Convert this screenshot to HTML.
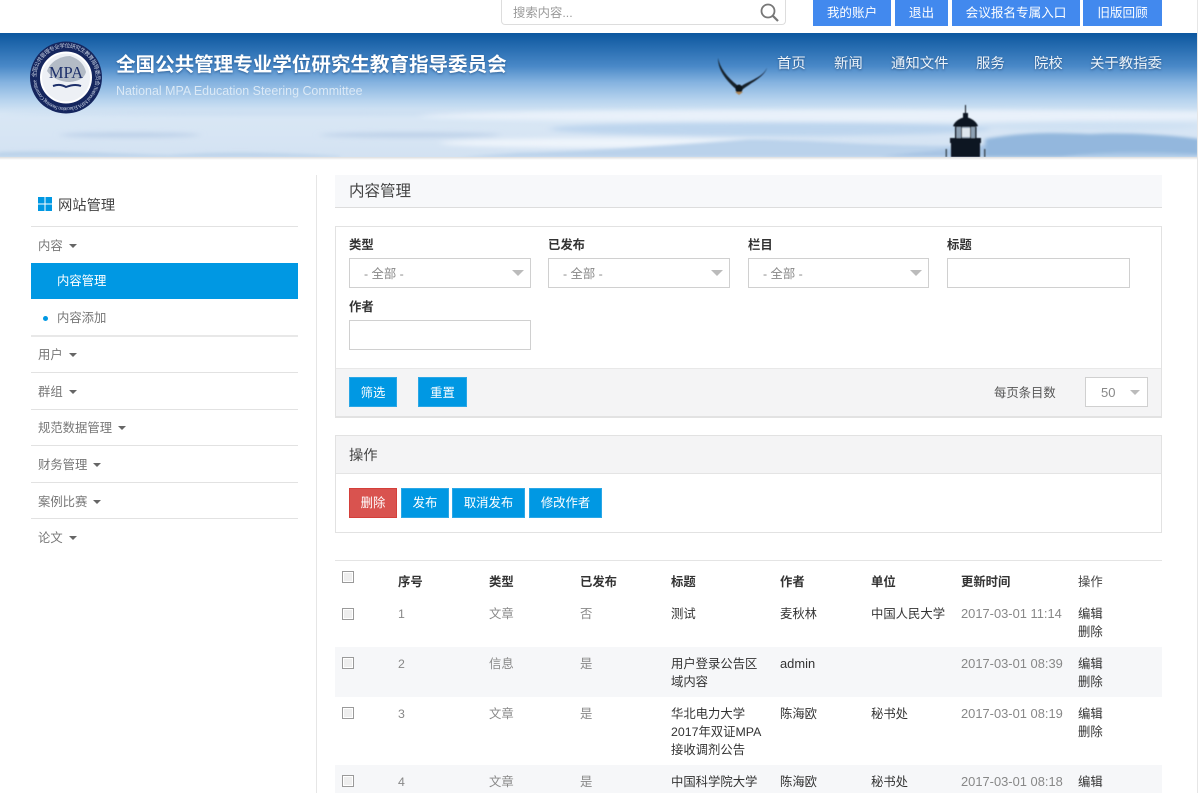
<!DOCTYPE html>
<html lang="zh">
<head>
<meta charset="utf-8">
<title>内容管理</title>
<style>
html,body{margin:0;padding:0;background:#fff;overflow:hidden}
body{width:1200px;height:793px;position:relative;font-family:"Liberation Sans","Noto Sans CJK SC",sans-serif;font-size:12.35px;color:#666}
body>*{filter:blur(.3px)}
.t{position:absolute;white-space:nowrap;line-height:18px}
.b{position:absolute;box-sizing:border-box}
.btn{position:absolute;box-sizing:border-box;color:#fff;text-align:center;height:30px;line-height:29px;background:#0098e3;border:1px solid #2aa7e6}
.top{position:absolute;top:0;height:26px;line-height:27px;background:#4289ee;color:#fff;text-align:center;font-size:12.6px}
.nav{position:absolute;top:54px;line-height:20px;font-size:14.4px;color:#eef4fa;white-space:nowrap;text-shadow:0 1px 2px rgba(20,50,90,.6)}
.line{position:absolute;left:31px;width:267px;height:1px;background:#e2e2e2}
.m{position:absolute;left:38px;line-height:18px;color:#777;white-space:nowrap;margin-top:1px}
.c{display:inline-block;width:0;height:0;margin-left:6px;vertical-align:2px;border-left:4px solid transparent;border-right:4px solid transparent;border-top:4px solid #666}
.lab{position:absolute;font-weight:bold;color:#333;line-height:18px;white-space:nowrap}
.sel{position:absolute;box-sizing:border-box;height:30px;width:182px;border:1px solid #d0d0d0;background:#fff;line-height:31px;color:#888;padding-left:14px}
.sel i{position:absolute;right:6px;top:11px;width:0;height:0;border-left:6px solid transparent;border-right:6px solid transparent;border-top:6px solid #bbb}
.cb{position:absolute;left:342px;width:12px;height:12px;box-sizing:border-box;border:1px solid #9a9a9a;background:#eee;box-shadow:inset 0 0 0 1px #fff}
.h{font-weight:bold;color:#333;margin-top:1px}
.d{color:#333;margin-top:1px}
.g{color:#888;margin-top:1px}
.dt{font-size:12.9px}
</style>
</head>
<body>

<!-- top bar -->
<div class="b" style="left:501px;top:0;width:285px;height:25px;border:1px solid #ddd;border-top:0;border-radius:0 0 4px 4px;background:#fff"></div>
<div class="t" style="left:513px;top:4px;color:#999">搜索内容...</div>
<svg style="position:absolute;left:759px;top:2px" width="21" height="21" viewBox="0 0 21 21"><circle cx="9" cy="9" r="6.500" fill="none" stroke="#777" stroke-width="1.800"/><path d="M13.800 13.800L19 19" stroke="#777" stroke-width="2.200" fill="none"/></svg>
<div class="top" style="left:813px;width:78px">我的账户</div>
<div class="top" style="left:895px;width:53px">退出</div>
<div class="top" style="left:952px;width:128px">会议报名专属入口</div>
<div class="top" style="left:1083px;width:79px">旧版回顾</div>

<!-- banner -->
<svg style="position:absolute;left:0;top:33px" width="1197" height="124" viewBox="0 0 1197 124">
  <defs>
    <linearGradient id="sky" x1="0" y1="0" x2="0" y2="1">
      <stop offset="0" stop-color="#0c579f"/>
      <stop offset=".27" stop-color="#4a89c8"/>
      <stop offset=".40" stop-color="#85b3e0"/>
      <stop offset=".54" stop-color="#b6d3ee"/>
      <stop offset=".65" stop-color="#d8e7f5"/>
      <stop offset=".81" stop-color="#d7e5f4"/>
      <stop offset="1" stop-color="#d3e2f2"/>
    </linearGradient>
    <filter id="bl" x="-30%" y="-200%" width="160%" height="500%"><feGaussianBlur stdDeviation="4 2.500"/></filter>
    <filter id="bl1" x="-10%" y="-50%" width="120%" height="200%"><feGaussianBlur stdDeviation="2 1.500"/></filter>
    <filter id="bl2"><feGaussianBlur stdDeviation=".5"/></filter>
  </defs>
  <rect width="1197" height="124" fill="url(#sky)"/>
  <!-- clouds -->
  <g filter="url(#bl)">
    <ellipse cx="130" cy="102" rx="70" ry="2.500" fill="#bcd0e8"/>
    <ellipse cx="410" cy="102" rx="90" ry="2.500" fill="#bcd0e8"/>
    <ellipse cx="300" cy="80" rx="300" ry="2" fill="#c9dcf0"/>
    <ellipse cx="860" cy="83" rx="440" ry="6" fill="#e9f1fa"/>
    <ellipse cx="770" cy="96" rx="220" ry="7" fill="#bdd5ee"/>
    <ellipse cx="620" cy="110" rx="180" ry="5" fill="#eef4fb"/>
    <ellipse cx="1090" cy="93" rx="110" ry="5" fill="#cfe1f3"/>
  </g>
  <g filter="url(#bl1)">
    <path d="M460 124L520 120C600 118 660 113 750 106C800 106 860 113 960 113L960 124Z" fill="#bad2eb"/>
    <path d="M880 124C920 118 960 116 985 112L1197 124Z" fill="#a8c5e4"/>
    <path d="M985 124L985 106C1030 98 1060 100 1090 101C1130 99 1170 102 1200 106L1200 124Z" fill="#93b7dd"/>
    <path d="M1060 124C1090 119 1140 118 1200 121L1200 124Z" fill="#a9c7e6"/>
    <path d="M-10 124L0 119C60 117 100 120 170 122C230 118 280 120 340 123L340 124Z" fill="#bcd3ea"/>
  </g>
  <!-- bird -->
  <g filter="url(#bl2)">
    <path d="M718 25C720 35 727 44 737 52L741 56L737 57C727 48 718 38 718 25Z" fill="#15202c"/>
    <path d="M767 35C764 44 752 49 742 57L740 54C750 47 762 45 767 35Z" fill="#15202c"/>
    <ellipse cx="739" cy="56" rx="3.500" ry="4.500" fill="#10161e"/>
    <path d="M735 59L743 59L739 62Z" fill="#b08a5c"/>
  </g>
  <!-- lighthouse -->
  <g filter="url(#bl2)" fill="#0e1620">
    <rect x="965" y="72" width="1" height="11"/>
    <rect x="963" y="80" width="5" height="6"/>
    <path d="M953 93C955 88 960 85 965.500 84C971 85 976 88 978 93L975 94H956Z"/>
    <rect x="955" y="94" width="21" height="12" fill="#8da0b3"/>
    <rect x="962" y="95" width="8" height="9" fill="#dfe7ee"/>
    <rect x="955" y="94" width="1.500" height="12"/>
    <rect x="961" y="94" width="1" height="12"/>
    <rect x="970" y="94" width="1" height="12"/>
    <rect x="975" y="94" width="1.500" height="12"/>
    <rect x="950" y="105" width="31" height="5"/>
    <rect x="951" y="110" width="29" height="14"/>
    <rect x="945.500" y="116" width="1.500" height="8" fill="#44525f"/>
    <rect x="984" y="116" width="1.500" height="8" fill="#44525f"/>
  </g>
  <!-- logo -->
  <circle cx="66" cy="44.500" r="36" fill="#15265e"/>
  <circle cx="66" cy="44.500" r="25" fill="#edf0f5" stroke="#fff" stroke-width="2"/>
  <path d="M47 38C50 29 60 23 70 23C79 26 84 31 86 39C84 46 78 48 70 49C60 49 52 45 47 38Z" fill="#b3bbc6"/>
  <path d="M53 53C59 51 62 52 66 54C71 52 76 51 81 53" fill="none" stroke="#1d2f6a" stroke-width="2"/>
  <text x="66" y="45" font-family="Liberation Serif" font-size="16.500" fill="#1d2f6a" text-anchor="middle">MPA</text>
  <path id="arc" d="M36 44.500A30 30 0 1 1 96 44.500A30 30 0 1 1 36 44.500" fill="none"/>
  <text font-size="5.500" fill="#c8d2e2" font-family="Liberation Serif,Noto Sans CJK SC"><textPath href="#arc" textLength="186">全国公共管理专业学位研究生教育指导委员会 National MPA Education Steering Committee</textPath></text>
</svg>
<div class="b" style="left:0;top:157px;width:1197px;height:3px;background:linear-gradient(#ddd,#fff)"></div>

<div class="t" style="left:116px;top:51px;font-size:19.550px;line-height:28px;font-weight:bold;color:#fff;text-shadow:0 1px 2px rgba(10,50,100,.5)">全国公共管理专业学位研究生教育指导委员会</div>
<div class="t" style="left:116px;top:82px;font-size:12.450px;color:#dbe9f6">National MPA Education Steering Committee</div>
<div class="nav" style="left:777px">首页</div>
<div class="nav" style="left:834px">新闻</div>
<div class="nav" style="left:891px">通知文件</div>
<div class="nav" style="left:976px">服务</div>
<div class="nav" style="left:1034px">院校</div>
<div class="nav" style="left:1090px">关于教指委</div>

<!-- sidebar -->
<div class="b" style="left:316px;top:175px;width:1px;height:618px;background:#e6e6e6"></div>
<svg style="position:absolute;left:38px;top:197px" width="14" height="14"><rect width="6.500" height="6.500" fill="#0098e3"/><rect x="7.500" width="6.500" height="6.500" fill="#0098e3"/><rect y="7.500" width="6.500" height="6.500" fill="#0098e3"/><rect x="7.500" y="7.500" width="6.500" height="6.500" fill="#0098e3"/></svg>
<div class="t" style="left:58px;top:196px;font-size:14.300px;line-height:20px;color:#444">网站管理</div>
<div class="line" style="top:226px"></div>
<div class="m" style="top:236px">内容<span class="c"></span></div>
<div class="b" style="left:31px;top:263px;width:267px;height:36px;background:#0098e3"></div>
<div class="t" style="left:57px;top:272px;color:#fff">内容管理</div>
<div class="b" style="left:43px;top:316px;width:5px;height:5px;border-radius:50%;background:#0098e3"></div>
<div class="t" style="left:57px;top:309px;color:#777">内容添加</div>
<div class="line" style="top:335px;background:#e8e8e8;height:2px"></div>
<div class="m" style="top:345px">用户<span class="c"></span></div>
<div class="line" style="top:372px"></div>
<div class="m" style="top:382px">群组<span class="c"></span></div>
<div class="line" style="top:409px"></div>
<div class="m" style="top:418px">规范数据管理<span class="c"></span></div>
<div class="line" style="top:445px"></div>
<div class="m" style="top:455px">财务管理<span class="c"></span></div>
<div class="line" style="top:482px"></div>
<div class="m" style="top:492px">案例比赛<span class="c"></span></div>
<div class="line" style="top:518px"></div>
<div class="m" style="top:528px">论文<span class="c"></span></div>

<!-- heading -->
<div class="b" style="left:335px;top:175px;width:827px;height:33px;background:#f7f8fa;border-bottom:1px solid #ddd"></div>
<div class="t" style="left:349px;top:182px;font-size:15.500px;line-height:20px;color:#444">内容管理</div>

<!-- filter panel -->
<div class="b" style="left:335px;top:226px;width:827px;height:192px;border:1px solid #e2e2e2;background:#fff"></div>
<div class="b" style="left:336px;top:368px;width:825px;height:49px;background:#f4f4f5;border-top:1px solid #e8e8e8;border-bottom:1px solid #e2e2e2"></div>
<div class="lab" style="left:349px;top:236px">类型</div>
<div class="lab" style="left:548px;top:236px">已发布</div>
<div class="lab" style="left:748px;top:236px">栏目</div>
<div class="lab" style="left:947px;top:236px">标题</div>
<div class="sel" style="left:349px;top:258px">- 全部 -<i></i></div>
<div class="sel" style="left:548px;top:258px">- 全部 -<i></i></div>
<div class="sel" style="left:748px;top:258px;width:181px">- 全部 -<i></i></div>
<div class="b" style="left:947px;top:258px;width:183px;height:30px;border:1px solid #d0d0d0;background:#fff"></div>
<div class="lab" style="left:349px;top:298px">作者</div>
<div class="b" style="left:349px;top:320px;width:182px;height:30px;border:1px solid #d0d0d0;background:#fff"></div>
<div class="btn" style="left:349px;top:377px;width:48px;line-height:30px">筛选</div>
<div class="btn" style="left:418px;top:377px;width:49px;line-height:30px">重置</div>
<div class="t" style="left:994px;top:384px;color:#555">每页条目数</div>
<div class="sel" style="left:1085px;top:377px;width:63px;padding-left:15px;line-height:29px;font-size:13px">50<i style="right:7px;top:12px;border-left-width:5.500px;border-right-width:5.500px;border-top-width:5px"></i></div>

<!-- actions panel -->
<div class="b" style="left:335px;top:435px;width:827px;height:98px;border:1px solid #e2e2e2;background:#fff"></div>
<div class="b" style="left:336px;top:436px;width:825px;height:38px;background:#f4f4f5;border-bottom:1px solid #e4e4e4"></div>
<div class="t" style="left:349px;top:446px;font-size:14.300px;line-height:20px;color:#444">操作</div>
<div class="btn" style="left:349px;top:488px;width:48px;background:#d9534f;border-color:#d43f3a">删除</div>
<div class="btn" style="left:401px;top:488px;width:48px">发布</div>
<div class="btn" style="left:452px;top:488px;width:73px">取消发布</div>
<div class="btn" style="left:529px;top:488px;width:73px">修改作者</div>

<!-- table -->
<div class="b" style="left:335px;top:560px;width:827px;height:1px;background:#e4e4e4"></div>
<div class="b" style="left:335px;top:647px;width:827px;height:50px;background:#f6f7f9"></div>
<div class="b" style="left:335px;top:765px;width:827px;height:28px;background:#f6f7f9"></div>

<div class="cb" style="top:571px"></div>
<div class="t h" style="left:398px;top:572px">序号</div>
<div class="t h" style="left:489px;top:572px">类型</div>
<div class="t h" style="left:580px;top:572px">已发布</div>
<div class="t h" style="left:671px;top:572px">标题</div>
<div class="t h" style="left:780px;top:572px">作者</div>
<div class="t h" style="left:871px;top:572px">单位</div>
<div class="t h" style="left:961px;top:572px">更新时间</div>
<div class="t" style="left:1078px;top:573px;color:#444">操作</div>

<div class="cb" style="top:608px"></div>
<div class="t g" style="left:398px;top:604px">1</div>
<div class="t g" style="left:489px;top:604px">文章</div>
<div class="t g" style="left:580px;top:604px">否</div>
<div class="t d" style="left:671px;top:604px">测试</div>
<div class="t d" style="left:780px;top:604px">麦秋林</div>
<div class="t d" style="left:871px;top:604px">中国人民大学</div>
<div class="t g dt" style="left:961px;top:604px">2017-03-01 11:14</div>
<div class="t d" style="left:1078px;top:604px">编辑<br>删除</div>

<div class="cb" style="top:657px"></div>
<div class="t g" style="left:398px;top:654px">2</div>
<div class="t g" style="left:489px;top:654px">信息</div>
<div class="t g" style="left:580px;top:654px">是</div>
<div class="t d" style="left:671px;top:654px">用户登录公告区<br>域内容</div>
<div class="t d" style="left:780px;top:654px;font-size:12.900px">admin</div>
<div class="t g dt" style="left:961px;top:654px">2017-03-01 08:39</div>
<div class="t d" style="left:1078px;top:654px">编辑<br>删除</div>

<div class="cb" style="top:707px"></div>
<div class="t g" style="left:398px;top:704px">3</div>
<div class="t g" style="left:489px;top:704px">文章</div>
<div class="t g" style="left:580px;top:704px">是</div>
<div class="t d" style="left:671px;top:704px">华北电力大学<br>2017年双证MPA<br>接收调剂公告</div>
<div class="t d" style="left:780px;top:704px">陈海欧</div>
<div class="t d" style="left:871px;top:704px">秘书处</div>
<div class="t g dt" style="left:961px;top:704px">2017-03-01 08:19</div>
<div class="t d" style="left:1078px;top:704px">编辑<br>删除</div>

<div class="cb" style="top:775px"></div>
<div class="t g" style="left:398px;top:772px">4</div>
<div class="t g" style="left:489px;top:772px">文章</div>
<div class="t g" style="left:580px;top:772px">是</div>
<div class="t d" style="left:671px;top:772px">中国科学院大学</div>
<div class="t d" style="left:780px;top:772px">陈海欧</div>
<div class="t d" style="left:871px;top:772px">秘书处</div>
<div class="t g dt" style="left:961px;top:772px">2017-03-01 08:18</div>
<div class="t d" style="left:1078px;top:772px">编辑</div>

<div class="b" style="left:1197px;top:0;width:1px;height:793px;background:#e6e6e6"></div>
</body>
</html>
